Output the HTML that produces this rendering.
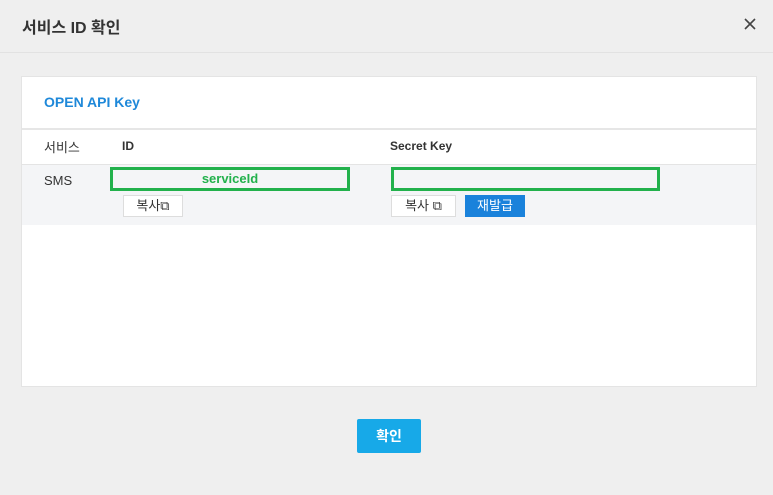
<!DOCTYPE html>
<html><head><meta charset="utf-8"><style>
*{box-sizing:border-box;margin:0;padding:0}
body{width:773px;height:495px;background:#efefef;font-family:"Liberation Sans","Noto Sans CJK KR",sans-serif;position:relative;overflow:hidden;color:#333}
.hdr{position:absolute;left:0;top:0;width:773px;height:53px;border-bottom:1px solid #e2e2e2}
.hdr h1{position:absolute;left:22px;top:14px;font-size:16px;font-weight:bold;color:#333}
.x{position:absolute;left:744px;top:18px;width:12px;height:12px}
.card{position:absolute;left:21px;top:76px;width:736px;height:311px;background:#fff;border:1px solid #e4e4e4}
.t{position:absolute;left:22px;top:17px;font-size:14px;font-weight:bold;color:#1e88d9}
.line{position:absolute;left:0;top:51px;width:734px;height:2px;background:#e6e6e6}
.row{position:absolute;left:0;top:87px;width:734px;height:61px;background:#f4f5f7;border-top:1px solid #e4e4e4}
.abs{position:absolute;font-size:13px}
.gb{position:absolute;border:3px solid #22b14c;height:24px}
.btn{position:absolute;background:#fff;border:1px solid #ddd;font-size:13px;height:22px;line-height:20px;color:#333;text-align:center}
.blue{background:#1a82db;color:#fff;border-color:#1a82db}
.ok{position:absolute;left:357px;top:419px;width:64px;height:34px;background:#17a9e8;border-radius:2px;color:#fff;font-size:14px;font-weight:bold;text-align:center;line-height:34px}
</style></head><body>
<div class="hdr"><h1>서비스 ID 확인</h1><svg class="x" viewBox="0 0 12 12"><path d="M1 1L11 11M11 1L1 11" stroke="#444" stroke-width="1.6"/></svg></div>
<div class="card">
<div class="t">OPEN API Key</div>
<div class="line"></div>
<div class="abs" style="left:22px;top:60px;color:#333">서비스</div>
<div class="abs" style="left:100px;top:62px;font-weight:bold;font-size:12px">ID</div>
<div class="abs" style="left:368px;top:62px;font-weight:bold;font-size:12px">Secret Key</div>
<div class="row"></div>
<div class="abs" style="left:22px;top:96px">SMS</div>
<div class="gb" style="left:88px;top:90px;width:240px;text-align:center;font-size:13px;font-weight:bold;color:#22b14c;line-height:17px">serviceId</div>
<div class="gb" style="left:369px;top:90px;width:269px"></div>
<div class="btn" style="left:101px;top:118px;width:60px">복사⧉</div>
<div class="btn" style="left:369px;top:118px;width:65px">복사 ⧉</div>
<div class="btn blue" style="left:443px;top:118px;width:60px">재발급</div>
</div>
<div class="ok">확인</div>
</body></html>
